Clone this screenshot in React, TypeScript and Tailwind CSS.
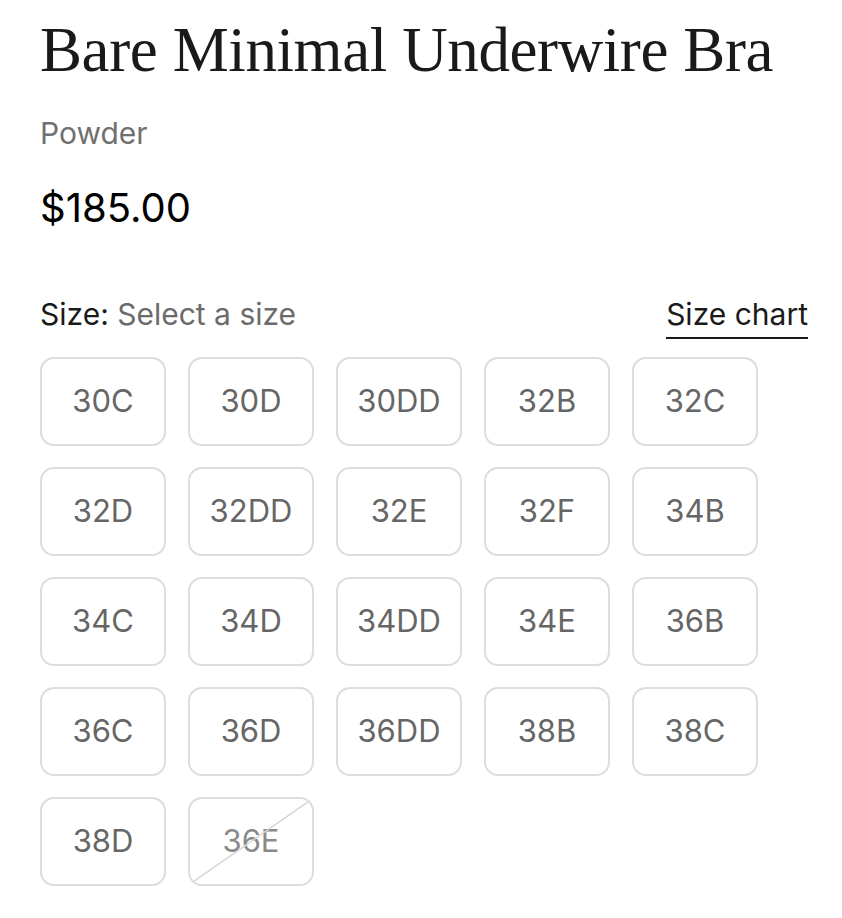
const sizes = [
  '30C', '30D', '30DD', '32B', '32C',
  '32D', '32DD', '32E', '32F', '34B',
  '34C', '34D', '34DD', '34E', '36B',
  '36C', '36D', '36DD', '38B', '38C',
  '38D',
]

function SizeButton({ label, soldOut }: { label: string; soldOut?: boolean }) {
  return (
    <button
      className={`relative w-[126px] h-[89px] rounded-[14px] border-2 border-[#dddddd] bg-white overflow-hidden flex items-center justify-center text-[31px] ${soldOut ? 'text-[#8a8a8a]' : 'text-[#666666]'}`}
    >
      {label}
      {soldOut && (
        <svg className="absolute inset-0 w-full h-full" viewBox="0 0 126 89" preserveAspectRatio="none">
          <line x1="0" y1="89" x2="126" y2="0" stroke="#d6d6d6" strokeWidth="1.5" />
        </svg>
      )}
    </button>
  )
}

export default function App() {
  return (
    <div className="w-[842px] h-[918px] bg-white pl-[40px] pt-[14px]" style={{ fontFamily: 'Inter, "Liberation Sans", sans-serif' }}>
      <h1
        className="text-[63px] leading-[72px] text-[#1a1a1a] tracking-[-0.4px] whitespace-nowrap"
        style={{ fontFamily: '"Liberation Serif", "DejaVu Serif", serif' }}
      >
        Bare Minimal Underwire Bra
      </h1>
      <div className="mt-[29px] text-[30px] leading-[36px] text-[#707070]">Powder</div>
      <div className="mt-[33px] text-[40px] leading-[48px] text-black">$185.00</div>

      <div className="mt-[64px] w-[768px] flex items-end justify-between">
        <div className="text-[30px] leading-[36px] text-[#1a1a1a]">
          Size: <span className="text-[#6b6b6b]">Select a size</span>
        </div>
        <a className="text-[30px] leading-[36px] text-[#1a1a1a] border-b-2 border-[#1a1a1a] pb-[5px] -mb-[7px]">Size chart</a>
      </div>

      <div className="mt-[25px] grid grid-cols-[repeat(5,126px)] gap-x-[22px] gap-y-[21px]">
        {sizes.map((s) => (
          <SizeButton key={s} label={s} />
        ))}
        <SizeButton label="36E" soldOut />
      </div>
    </div>
  )
}
